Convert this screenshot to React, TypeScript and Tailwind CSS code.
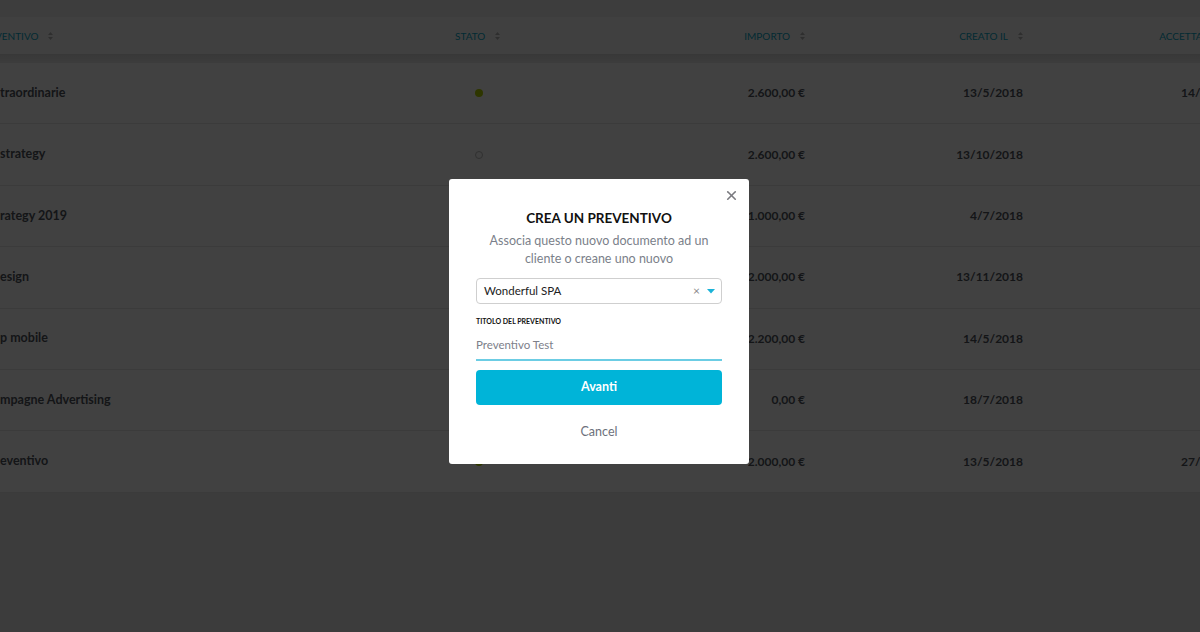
import { X } from 'lucide-react';

type Row = {
  title: string;
  stato: 'ok' | 'draft';
  importo: string;
  creato: string;
  accettato: string;
};

// The page under the modal is cut off on the left and right in the screenshot
const rows: Row[] = [
  { title: 'traordinarie', stato: 'ok', importo: '2.600,00 €', creato: '13/5/2018', accettato: '14/5/2018' },
  { title: 'strategy', stato: 'draft', importo: '2.600,00 €', creato: '13/10/2018', accettato: '' },
  { title: 'rategy 2019', stato: 'ok', importo: '1.000,00 €', creato: '4/7/2018', accettato: '' },
  { title: 'esign', stato: 'draft', importo: '2.000,00 €', creato: '13/11/2018', accettato: '' },
  { title: 'p mobile', stato: 'draft', importo: '2.200,00 €', creato: '14/5/2018', accettato: '' },
  { title: 'mpagne Advertising', stato: 'draft', importo: '0,00 €', creato: '18/7/2018', accettato: '' },
  { title: 'eventivo', stato: 'ok', importo: '2.000,00 €', creato: '13/5/2018', accettato: '27/5/2018' },
];

function SortIcon() {
  return (
    <svg width="5" height="8" viewBox="0 0 5 8" className="ml-[10px] shrink-0" aria-hidden="true">
      <path d="M2.5 0 L5 3 H0 Z M2.5 8 L5 5 H0 Z" fill="#b5b5b5" />
    </svg>
  );
}

function HeaderCell({ label, className }: { label: string; className: string }) {
  return (
    <div className={`flex shrink-0 items-center ${className}`}>
      <span className="text-[10px] uppercase text-[#0aa6c6]">{label}</span>
      <SortIcon />
    </div>
  );
}

function StatusDot({ stato }: { stato: Row['stato'] }) {
  if (stato === 'ok') return <span className="ml-[20px] block h-2 w-2 rounded-full bg-[#b5d300]" />;
  return <span className="ml-[20px] block h-2 w-2 rounded-full border border-[#bdbdbd]" />;
}

function CreateModal() {
  return (
    <div className="absolute left-[449px] top-[179px] w-[300px] rounded-[3px] bg-white px-[27px] pb-[23px] pt-[30px]">
      <button className="absolute right-[10px] top-[9px] text-[#7a7a7f]">
        <X size={15} strokeWidth={2.6} />
      </button>
      <h2 className="text-center text-[13.5px] font-bold leading-[18px] text-[#111]">CREA UN PREVENTIVO</h2>
      <p className="mt-[5px] text-center text-[12.5px] leading-[18px] text-[#7b7f8a]">
        Associa questo nuovo documento ad un
        <br />
        cliente o creane uno nuovo
      </p>
      <div className="mt-[10px] flex h-[26px] items-center rounded-[4px] border border-[#cfcfcf] pl-[7px] pr-[6px]">
        <span className="flex-1 text-[11.5px] text-[#222]">Wonderful SPA</span>
        <span className="text-[12px] leading-none text-[#8a8a8a]">×</span>
        <svg width="8" height="5" viewBox="0 0 8 5" className="ml-[7px]" aria-hidden="true">
          <path d="M0 0 H8 L4 4.5 Z" fill="#1bb3d8" />
        </svg>
      </div>
      <div className="mt-[12px] text-[7px] font-bold uppercase leading-[10px] text-[#111]">Titolo del preventivo</div>
      <div className="mt-[11px] border-b-2 border-[#6ccde4] pb-[6px] text-[11.5px] leading-[16px] text-[#7d808a]">
        Preventivo Test
      </div>
      <button className="mt-[9px] flex h-[35px] w-full items-center justify-center rounded-[4px] bg-[#00b4d8] text-[12.5px] font-bold text-white">
        Avanti
      </button>
      <div className="mt-[18px] text-center text-[12.5px] leading-[18px] text-[#6d717c]">Cancel</div>
    </div>
  );
}

export default function App() {
  return (
    <div
      className="relative h-[632px] w-full overflow-hidden bg-[#ececec]"
      style={{ fontFamily: 'Lato, "Noto Sans", sans-serif' }}
    >
      <div className="h-[18px] border-b border-[#fafafa] bg-[#f0f0f0]" />
      <div className="flex h-[36px] items-center bg-[#fcfcfc]">
        <HeaderCell label="ventivo" className="-ml-[5px] w-[460px]" />
        <HeaderCell label="Stato" className="w-[132px]" />
        <HeaderCell label="Importo" className="w-[218px] justify-end" />
        <HeaderCell label="Creato il" className="w-[218px] justify-end" />
        <HeaderCell label="Accettato il" className="w-[218px] justify-end" />
      </div>
      <div className="h-[9px] bg-gradient-to-b from-[#dcdcdc] to-[#ececec]" />
      <div>
        {rows.map((r) => (
          <div key={r.title} className="flex h-[61.4px] items-center border-b border-[#e8e8e8] bg-white">
            <div className="w-[455px] shrink-0 text-[12.5px] font-bold text-[#50555d]">{r.title}</div>
            <div className="w-[132px] shrink-0">
              <StatusDot stato={r.stato} />
            </div>
            <div className="w-[218px] shrink-0 text-right text-[12px] font-bold text-[#50555d]">{r.importo}</div>
            <div className="w-[218px] shrink-0 text-right text-[12px] font-bold text-[#50555d]">{r.creato}</div>
            <div className="w-[218px] shrink-0 text-right text-[12px] font-bold text-[#50555d]">{r.accettato}</div>
          </div>
        ))}
      </div>
      {/* modal backdrop */}
      <div className="absolute inset-0 bg-black/[0.745]" />
      <CreateModal />
    </div>
  );
}
